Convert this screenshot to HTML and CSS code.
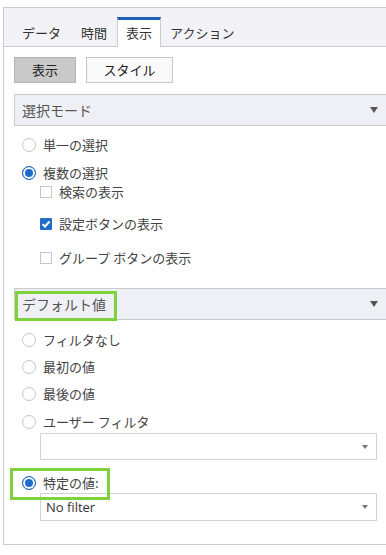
FILE: index.html
```html
<!DOCTYPE html>
<html lang="ja">
<head>
  <meta charset="UTF-8" />
  <meta name="viewport" content="width=device-width, initial-scale=1.0"/>
  <title>フィルタ設定</title>
  <link rel="stylesheet" href="styles.css">
</head>
<body>

  <div class="panel">
    <div class="tabs">
      <div class="tab">データ</div>
      <div class="tab">時間</div>
      <div class="tab active">表示</div>
      <div class="tab">アクション</div>
    </div>

    <div class="content">
      <div class="buttons">
        <button class="btn pressed">表示</button>
        <button class="btn style-btn">スタイル</button>
      </div>

      <div class="section">
        <span>選択モード</span>
        <span class="caret"></span>
      </div>

      <div class="opt r1"><span class="radio"></span>単一の選択</div>
      <div class="opt r2"><span class="radio on"></span>複数の選択</div>
      <div class="opt sub c1"><span class="check"></span>検索の表示</div>
      <div class="opt sub c2">
        <span class="check on">
          <svg width="12" height="12" viewBox="0 0 12 12"><path d="M2.6 6.1 L5 8.5 L9.5 3.5" fill="none" stroke="#fff" stroke-width="2"/></svg>
        </span>設定ボタンの表示
      </div>
      <div class="opt sub c3"><span class="check"></span>グループ ボタンの表示</div>

      <div class="section second">
        <span>デフォルト値</span>
        <span class="caret"></span>
        <div class="highlight head-mark"></div>
      </div>

      <div class="opt r3"><span class="radio"></span>フィルタなし</div>
      <div class="opt r4"><span class="radio"></span>最初の値</div>
      <div class="opt r5"><span class="radio"></span>最後の値</div>
      <div class="opt r6"><span class="radio"></span>ユーザー フィルタ</div>
      <div class="dropdown first"><span></span><span class="small-caret"></span></div>

      <div class="opt r7"><span class="radio on"></span>特定の値:<div class="highlight opt-mark"></div></div>
      <div class="dropdown last"><span>No filter</span><span class="small-caret"></span></div>
    </div>
  </div>

</body>
</html>
```

FILE: styles.css
```css
body {
  margin: 0;
  overflow: hidden;
  background: #fff;
  font-family: 'Noto Sans CJK JP', 'Open Sans', sans-serif;
  color: #444;
}

.panel {
  margin: 7px 0 0 3px;
  width: 400px;
  border: 1px solid #cbcbcb;
}

.tabs {
  display: flex;
  align-items: flex-end;
  height: 38px;
  padding-left: 8px;
  background: #f3f3f7;
  border-bottom: 1px solid #cbcbcb;
}

.tab {
  box-sizing: border-box;
  height: 30px;
  margin-bottom: -1px;
  padding: 0 10px;
  border-top: 3px solid transparent;
  font-size: 13px;
  line-height: 26px;
  color: #333;
}

.tab.active {
  padding: 0 8px;
  background: #fff;
  border-top-color: #1f5fb5;
  border-left: 1px solid #cbcbcb;
  border-right: 1px solid #cbcbcb;
}

.tab.active + .tab {
  padding-left: 9px;
}

.content {
  padding: 10px 0 23px 10px;
}

.buttons {
  display: flex;
  gap: 10px;
}

.btn {
  box-sizing: border-box;
  height: 26px;
  padding: 0;
  font-family: 'Noto Sans CJK JP', sans-serif;
  font-size: 13px;
  line-height: 24px;
  color: #222;
  border: 1px solid #c6c6c6;
  background: #f9f9f9;
}

.btn.pressed {
  width: 62px;
  background: #c9c9c9;
  border-color: #b3b3b3;
}

.style-btn {
  width: 87px;
}

.section {
  position: relative;
  box-sizing: border-box;
  display: flex;
  align-items: center;
  height: 32px;
  margin-top: 11px;
  padding: 0 25px 0 7px;
  background: #eff0f5;
  border: 1px solid #cbcbcb;
  font-size: 14px;
  color: #555;
}

.section.second {
  margin-top: 21px;
}

.caret {
  margin-left: auto;
  width: 0;
  height: 0;
  border-left: 4.5px solid transparent;
  border-right: 4.5px solid transparent;
  border-top: 6px solid #555;
}

.highlight {
  position: absolute;
  box-sizing: border-box;
  border: 3px solid #7ed23c;
}

.head-mark {
  left: 0;
  top: 2px;
  width: 102px;
  height: 30px;
}

.opt {
  position: relative;
  display: flex;
  align-items: center;
  height: 18px;
  padding-left: 8px;
  font-size: 13px;
  line-height: 18px;
  color: #444;
}

.r1 { margin-top: 10px; }
.r2 { margin-top: 10px; }
.c1 { margin-top: 1px; }
.c2 { margin-top: 14px; }
.c3 { margin-top: 16px; }
.r3 { margin-top: 11px; }
.r4 { margin-top: 9px; }
.r5 { margin-top: 9px; }
.r6 { margin-top: 10px; }
.r7 { margin-top: 14px; }

.radio {
  box-sizing: border-box;
  width: 14px;
  height: 14px;
  margin-right: 7px;
  border: 1px solid #c6c6c6;
  border-radius: 50%;
  background: #fff;
}

.radio.on {
  border-color: #2a68bd;
  background: #1e6cc8;
  box-shadow: inset 0 0 0 2px #fff;
}

.opt.sub {
  padding-left: 26px;
}

.check {
  box-sizing: border-box;
  display: flex;
  width: 12px;
  height: 12px;
  margin-right: 7px;
  border: 1px solid #c6c6c6;
  background: #fff;
}

.check.on {
  border: none;
  background: #1f6dc8;
  border-radius: 1px;
}

.opt-mark {
  left: -4px;
  top: -6px;
  width: 100px;
  height: 32px;
}

.dropdown {
  box-sizing: border-box;
  display: flex;
  align-items: center;
  width: 337px;
  margin-left: 26px;
  padding: 0 8px 0 5px;
  border: 1px solid #d3d3d3;
  background: #fff;
  font-family: 'Open Sans', sans-serif;
  font-size: 13px;
  color: #333;
}

.dropdown.first {
  height: 27px;
  margin-top: 2px;
}

.dropdown.last {
  height: 28px;
  margin-top: 1px;
}

.small-caret {
  margin-left: auto;
  width: 0;
  height: 0;
  border-left: 3px solid transparent;
  border-right: 3px solid transparent;
  border-top: 4px solid #777;
}
```
